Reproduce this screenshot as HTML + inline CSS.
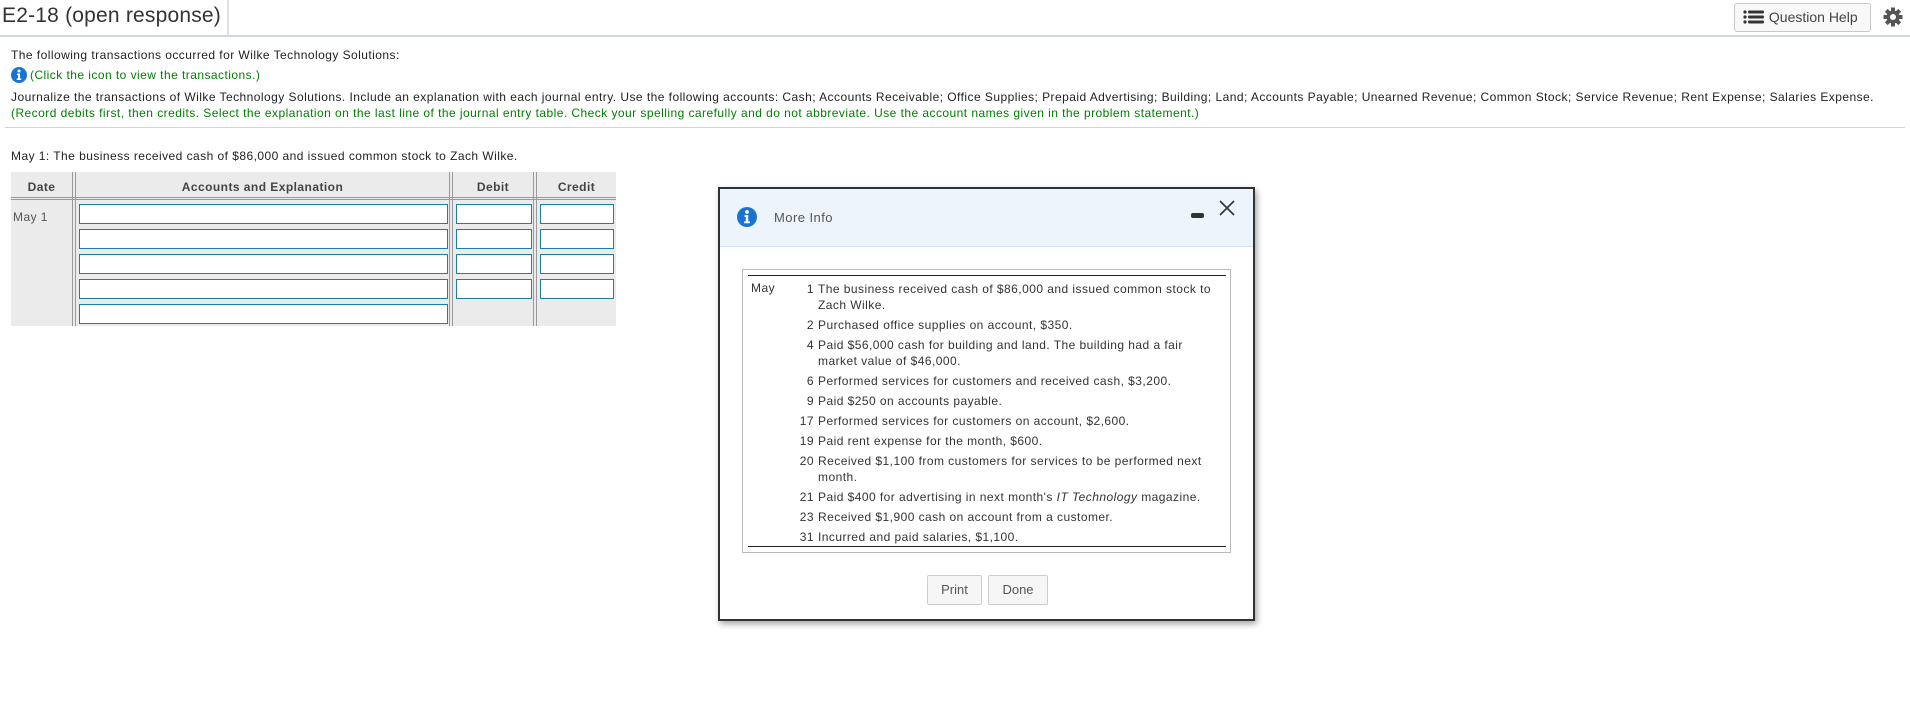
<!DOCTYPE html>
<html><head><meta charset="utf-8"><style>
*{box-sizing:border-box;margin:0;padding:0}
body{width:1910px;height:710px;background:#fff;font-family:"Liberation Sans",Arial,sans-serif;color:#222;position:relative;overflow:hidden;font-size:12px;letter-spacing:0.45px}
.a{position:absolute;white-space:nowrap}
.g{color:#008000}
.inp{position:absolute;border:1px solid #1a7fa6;background:#fff;height:20px}
.r{display:flex;margin-bottom:4px}.r span:first-child{width:30px;text-align:right;padding-right:4px;flex:none}
</style></head><body>
<div class="a" style="left:2px;top:4px;font-size:21px;color:#333;letter-spacing:0.2px">E2-18 (open response)</div>
<div class="a" style="left:227px;top:0;width:2px;height:36px;background:#dde2ea"></div>
<div class="a" style="left:0;top:35px;width:1910px;height:2px;background:#d0d6e2"></div>
<div class="a" style="left:1734px;top:3px;width:137px;height:29px;border:1px solid #c8c8c8;border-radius:3px;background:#f8f8f8;font-size:14px;color:#444;line-height:27px;padding-left:8px;letter-spacing:0">
<svg width="22" height="14" viewBox="0 0 22 14" style="vertical-align:-2px"><g fill="#333"><circle cx="2" cy="2" r="1.6"/><circle cx="2" cy="7" r="1.6"/><circle cx="2" cy="12" r="1.6"/><rect x="5" y="0.5" width="16" height="3" rx="1.2"/><rect x="5" y="5.5" width="16" height="3" rx="1.2"/><rect x="5" y="10.5" width="16" height="3" rx="1.2"/></g></svg> Question Help</div>
<svg class="a" style="left:1883px;top:7px" width="20" height="20" viewBox="0 0 20 20"><g fill="#555"><circle cx="10" cy="10" r="6.5"/><rect x="8" y="0.5" width="4" height="19"/><rect x="0.5" y="8" width="19" height="4"/><rect x="8" y="0.5" width="4" height="19" transform="rotate(45 10 10)"/><rect x="8" y="0.5" width="4" height="19" transform="rotate(-45 10 10)"/></g><circle cx="10" cy="10" r="3" fill="#fff"/></svg>

<div class="a" style="left:11px;top:48px">The following transactions occurred for Wilke Technology Solutions:</div>
<svg class="a" style="left:11px;top:67px" width="16" height="16" viewBox="0 0 16 16"><circle cx="8" cy="8" r="8" fill="#1a73d0"/><circle cx="8" cy="4" r="1.5" fill="#fff"/><path d="M6 6.5h3v5h1.3v1.5H5.7v-1.5H7v-3.5h-1z" fill="#fff"/></svg>
<div class="a g" style="left:30px;top:68px">(Click the icon to view the transactions.)</div>
<div class="a" style="left:11px;top:90px">Journalize the transactions of Wilke Technology Solutions. Include an explanation with each journal entry. Use the following accounts: Cash; Accounts Receivable; Office Supplies; Prepaid Advertising; Building; Land; Accounts Payable; Unearned Revenue; Common Stock; Service Revenue; Rent Expense; Salaries Expense.</div>
<div class="a g" style="left:11px;top:106px">(Record debits first, then credits. Select the explanation on the last line of the journal entry table. Check your spelling carefully and do not abbreviate. Use the account names given in the problem statement.)</div>
<div class="a" style="left:5px;top:127px;width:1900px;height:1px;background:#cfd4dc"></div>
<div class="a" style="left:11px;top:149px">May 1: The business received cash of $86,000 and issued common stock to Zach Wilke.</div>

<div class="a" style="left:11px;top:172px;width:605px;height:154px;background:#ebebeb"></div>
<div class="a" style="left:11px;top:197px;width:605px;height:3px;border-top:1px solid #999;border-bottom:1px solid #999"></div>
<div class="a" style="left:72px;top:172px;width:4px;height:154px;border-left:1px solid #999;border-right:1px solid #999"></div>
<div class="a" style="left:449px;top:172px;width:4px;height:154px;border-left:1px solid #999;border-right:1px solid #999"></div>
<div class="a" style="left:533px;top:172px;width:4px;height:154px;border-left:1px solid #999;border-right:1px solid #999"></div>
<div class="a" style="left:11px;top:180px;width:61px;text-align:center;font-weight:bold;color:#444">Date</div>
<div class="a" style="left:76px;top:180px;width:373px;text-align:center;font-weight:bold;color:#444">Accounts and Explanation</div>
<div class="a" style="left:453px;top:180px;width:80px;text-align:center;font-weight:bold;color:#444">Debit</div>
<div class="a" style="left:537px;top:180px;width:79px;text-align:center;font-weight:bold;color:#444">Credit</div>
<div class="a" style="left:13px;top:210px;color:#555">May 1</div>
<div class="inp" style="left:79px;top:204px;width:369px"></div><div class="inp" style="left:456px;top:204px;width:76px"></div><div class="inp" style="left:540px;top:204px;width:74px"></div>
<div class="inp" style="left:79px;top:229px;width:369px"></div><div class="inp" style="left:456px;top:229px;width:76px"></div><div class="inp" style="left:540px;top:229px;width:74px"></div>
<div class="inp" style="left:79px;top:254px;width:369px"></div><div class="inp" style="left:456px;top:254px;width:76px"></div><div class="inp" style="left:540px;top:254px;width:74px"></div>
<div class="inp" style="left:79px;top:279px;width:369px"></div><div class="inp" style="left:456px;top:279px;width:76px"></div><div class="inp" style="left:540px;top:279px;width:74px"></div>
<div class="inp" style="left:79px;top:304px;width:369px"></div>

<div class="a" style="left:718px;top:187px;width:537px;height:434px;border:2px solid #333;background:#fff;box-shadow:2px 3px 6px rgba(0,0,0,.35)"></div>
<div class="a" style="left:720px;top:189px;width:533px;height:58px;background:#eef4fc;border-bottom:1px solid #cfe2f7"></div>
<svg class="a" style="left:737px;top:207px" width="20" height="20" viewBox="0 0 16 16"><circle cx="8" cy="8" r="8" fill="#1a73d0"/><circle cx="8" cy="4" r="1.5" fill="#fff"/><path d="M6 6.5h3v5h1.3v1.5H5.7v-1.5H7v-3.5h-1z" fill="#fff"/></svg>
<div class="a" style="left:774px;top:210px;font-size:13px;color:#555">More Info</div>
<div class="a" style="left:1191px;top:213px;width:13px;height:5px;border-radius:2px;background:#333"></div>
<svg class="a" style="left:1218px;top:199px" width="18" height="18" viewBox="0 0 18 18"><path d="M2 2L16 16M16 2L2 16" stroke="#333" stroke-width="1.6"/></svg>

<div class="a" style="left:742px;top:269px;width:489px;height:284px;border:1px solid #bbb"></div>
<div class="a" style="left:748px;top:275px;width:478px;height:1px;background:#222"></div>
<div class="a" style="left:748px;top:546px;width:478px;height:1px;background:#222"></div>
<div class="a" style="left:751px;top:281px;color:#333">May</div>
<div class="a" style="left:788px;top:281px;width:440px;color:#333;line-height:16px;white-space:nowrap;font-size:12px">
<div class="r"><span>1</span><span>The business received cash of $86,000 and issued common stock to<br>Zach Wilke.</span></div>
<div class="r"><span>2</span><span>Purchased office supplies on account, $350.</span></div>
<div class="r"><span>4</span><span>Paid $56,000 cash for building and land. The building had a fair<br>market value of $46,000.</span></div>
<div class="r"><span>6</span><span>Performed services for customers and received cash, $3,200.</span></div>
<div class="r"><span>9</span><span>Paid $250 on accounts payable.</span></div>
<div class="r"><span>17</span><span>Performed services for customers on account, $2,600.</span></div>
<div class="r"><span>19</span><span>Paid rent expense for the month, $600.</span></div>
<div class="r"><span>20</span><span>Received $1,100 from customers for services to be performed next<br>month.</span></div>
<div class="r"><span>21</span><span>Paid $400 for advertising in next month's <i>IT Technology</i> magazine.</span></div>
<div class="r"><span>23</span><span>Received $1,900 cash on account from a customer.</span></div>
<div class="r"><span>31</span><span>Incurred and paid salaries, $1,100.</span></div>
</div>
<div class="a" style="left:927px;top:575px;width:55px;height:30px;border:1px solid #ccc;border-radius:2px;background:#f6f6f6;text-align:center;line-height:28px;font-size:13px;color:#555;letter-spacing:0">Print</div>
<div class="a" style="left:988px;top:575px;width:60px;height:30px;border:1px solid #ccc;border-radius:2px;background:#f6f6f6;text-align:center;line-height:28px;font-size:13px;color:#555;letter-spacing:0">Done</div>
</body></html>
